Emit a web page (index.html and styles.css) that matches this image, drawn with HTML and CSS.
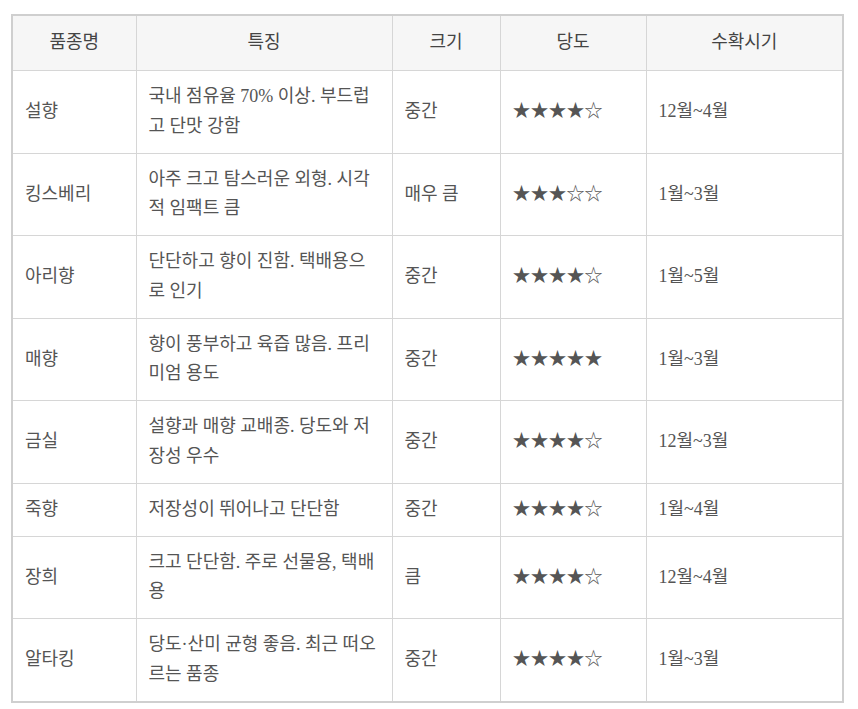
FILE: index.html
```html
<!DOCTYPE html>
<html lang="ko">
<head>
<meta charset="utf-8">
<title>딸기 품종</title>
<link rel="stylesheet" href="styles.css">
</head>
<body>
<table class="varieties">
  <colgroup>
    <col class="c-name">
    <col class="c-feature">
    <col class="c-size">
    <col class="c-sweet">
    <col class="c-season">
  </colgroup>
  <thead>
    <tr><th>품종명</th><th>특징</th><th>크기</th><th>당도</th><th>수확시기</th></tr>
  </thead>
  <tbody>
    <tr><td>설향</td><td>국내 점유율 70% 이상. 부드럽고 단맛 강함</td><td>중간</td><td class="stars">★★★★☆</td><td>12월~4월</td></tr>
    <tr><td>킹스베리</td><td>아주 크고 탐스러운 외형. 시각적 임팩트 큼</td><td>매우 큼</td><td class="stars">★★★☆☆</td><td>1월~3월</td></tr>
    <tr><td>아리향</td><td>단단하고 향이 진함. 택배용으로 인기</td><td>중간</td><td class="stars">★★★★☆</td><td>1월~5월</td></tr>
    <tr><td>매향</td><td>향이 풍부하고 육즙 많음. 프리미엄 용도</td><td>중간</td><td class="stars">★★★★★</td><td>1월~3월</td></tr>
    <tr><td>금실</td><td>설향과 매향 교배종. 당도와 저장성 우수</td><td>중간</td><td class="stars">★★★★☆</td><td>12월~3월</td></tr>
    <tr><td>죽향</td><td>저장성이 뛰어나고 단단함</td><td>중간</td><td class="stars">★★★★☆</td><td>1월~4월</td></tr>
    <tr><td>장희</td><td>크고 단단함. 주로 선물용, 택배용</td><td>큼</td><td class="stars">★★★★☆</td><td>12월~4월</td></tr>
    <tr><td>알타킹</td><td>당도·산미 균형 좋음. 최근 떠오르는 품종</td><td>중간</td><td class="stars">★★★★☆</td><td>1월~3월</td></tr>
  </tbody>
</table>
</body>
</html>
```

FILE: styles.css
```css
html, body {
  margin: 0;
  padding: 0;
  background: #fff;
}
body {
  padding: 14px 0 0 11px;
  font-family: "Liberation Serif", "Noto Sans CJK KR", serif;
  font-size: 18px;
  color: #555;
}
.varieties {
  border-collapse: collapse;
  table-layout: fixed;
  width: 831px;
  border: 2px solid #cfcfcf;
}
.c-name { width: 124px; }
.c-feature { width: 256px; }
.c-size { width: 108px; }
.c-sweet { width: 146px; }
.c-season { width: 197px; }
.varieties th,
.varieties td {
  border: 1px solid #d6d6d6;
  padding: 11.25px 12px;
  line-height: 29.5px;
  vertical-align: middle;
  text-align: left;
}
.varieties th {
  padding-top: 12.25px;
  padding-bottom: 12.25px;
  background: #f6f6f6;
  font-weight: normal;
  color: #444;
  text-align: center;
}
.varieties .stars {
  color: #555;
}
```
